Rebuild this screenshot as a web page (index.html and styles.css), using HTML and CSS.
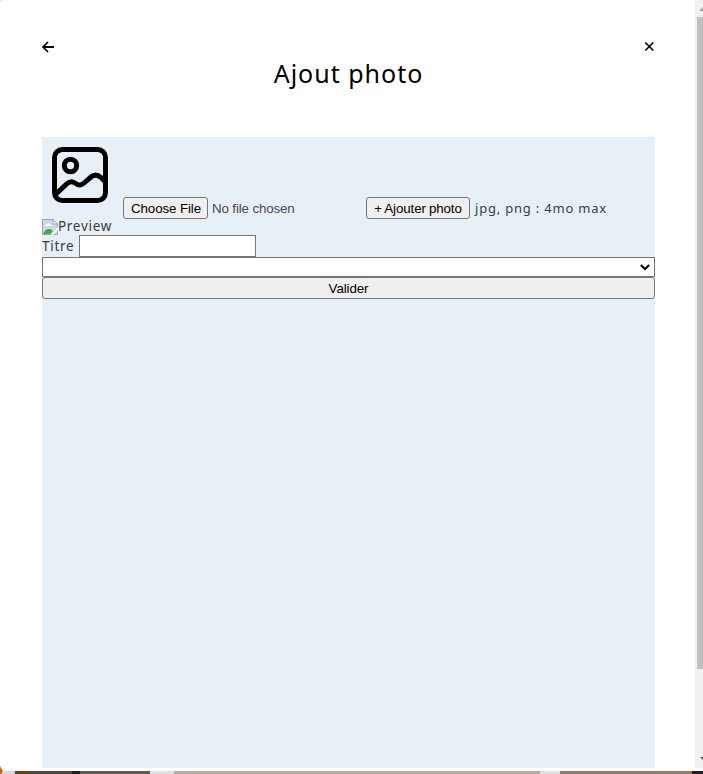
FILE: index.html
```html
<!DOCTYPE html>
<html lang="fr">
<head>
<meta charset="utf-8">
<title>Ajout photo</title>
<link rel="stylesheet" href="styles.css">
</head>
<body>
<div class="modal">
  <main class="content">
    <nav class="nav">
      <svg width="12" height="12" viewBox="0 0 12 12" fill="none" stroke="#000" stroke-width="2"><path d="M12 6H1"/><path d="M6 1L1 6l5 5" stroke-width="1.7"/></svg>
      <svg width="11" height="12" viewBox="0 0 11 12" fill="none" stroke="#000" stroke-width="1.7"><path d="M1.3 1.500l8 8M9.3 1.500l-8 8"/></svg>
    </nav>
    <h1 class="title">Ajout photo</h1>
    <form class="form">
      <div class="upload">
        <svg class="picture" width="56" height="56" viewBox="0 0 56 56" fill="none" stroke="#000" stroke-width="5"><rect x="2.5" y="2.5" width="51" height="51" rx="8"/><circle cx="18.5" cy="18.5" r="6.2"/><path d="M3 48L14 37.5Q18.5 33 23 36Q27.500 40 32 36L39 30Q44 26 49 30.500L54 35.500"/></svg>
        <input class="file" type="file">
        <button class="add" type="button">+ Ajouter photo</button>
        <span class="hint">jpg, png : 4mo max</span>
      </div>
      <div class="preview">
        <svg width="16" height="16" viewBox="0 0 16 16"><path d="M.5.500H11L15.500 5v10.500H.5z" fill="#c5d9f6" stroke="#a5a5a5"/><path d="M11 .5V5h4.500z" fill="#fff" stroke="#a5a5a5"/><path d="M3 7Q3 5 5 5Q7 3 8.500 6Q10 6 10 7z" fill="#fff"/><path d="M1 15Q3 10 7 10Q9 10 11 12L8 15z" fill="#49a835"/><path d="M16 8L9 16h2l5-5z" fill="#fff"/></svg><span class="preview-text">Preview</span>
      </div>
      <label class="field"><span class="field-text">Titre</span><input class="text" type="text"></label>
      <div class="select"><svg width="10" height="7" viewBox="0 0 10 7" fill="none" stroke="#000" stroke-width="2"><path d="M.8 1L5 5l4.200-4"/></svg></div>
      <button class="submit" type="button">Valider</button>
    </form>
  </main>
  <aside class="scrollbar">
    <svg class="cap" width="8" height="17" viewBox="0 0 8 17"><path d="M4 11L8 7v4z" fill="#a3a3a3"/></svg>
    <div class="thumb"></div>
    <svg class="cap end" width="8" height="17" viewBox="0 0 8 17"><path d="M5 6h3v3z" fill="#505050"/></svg>
  </aside>
</div>
<div class="backdrop"></div>
</body>
</html>
```
FILE: styles.css
```css
* { box-sizing: border-box; }
body {
  margin: 0;
  height: 774px;
  display: flex;
  flex-direction: column;
  overflow: hidden;
  background: linear-gradient(#e4e4e4 20px, transparent 20px), linear-gradient(90deg, #b86b20 3px, #dce3e6 3px);
  font-family: "Noto Sans", sans-serif;
  color: #3d3d3d;
}
.modal {
  height: 771px;
  padding-bottom: 3px;
  display: flex;
  background: #fff;
  border-radius: 4px 0 0 6px;
}
.content {
  width: 695px;
  padding: 41px 40px 0 42px;
  display: flex;
  flex-direction: column;
}
.nav { height: 12px; display: flex; justify-content: space-between; }
.title {
  margin: 3px 0 0;
  height: 36px;
  line-height: 35px;
  text-align: center;
  font-size: 25px;
  font-weight: 400;
  letter-spacing: 1px;
  color: #000;
}
.form {
  margin-top: 45px;
  flex: 1;
  display: flex;
  flex-direction: column;
  background: #e8f0f7;
}
.upload { height: 82px; display: flex; align-items: flex-end; }
.picture { margin: 0 15px 16px 10px; }
button, .file::file-selector-button {
  height: 22px;
  margin: 0;
  padding: 0 7px;
  border: 1px solid #767676;
  border-radius: 3px;
  background: #efefef;
  color: #000;
  font: 13.33px "Liberation Sans", sans-serif;
  letter-spacing: -.1px;
}
.file {
  width: 239px;
  height: 22px;
  margin-right: 4px;
  font: 13.33px "Liberation Sans", sans-serif;
  letter-spacing: -.13px;
  color: #484848;
}
.file::file-selector-button { width: 85px; margin-right: 4px; }
.add { width: 104px; white-space: nowrap; word-spacing: -.5px; }
.hint { margin-left: 5px; height: 22px; line-height: 22px; font-size: 13px; letter-spacing: .8px; white-space: nowrap; }
.preview { height: 16px; display: flex; line-height: 15px; font-size: 13.5px; letter-spacing: .7px; }
.field { height: 22px; display: flex; line-height: 22px; font-size: 13.5px; letter-spacing: .7px; }
.field-text { width: 37px; }
.text { width: 177px; height: 22px; border: 1px solid #767676; background: #fff; }
.select {
  height: 20px;
  padding-right: 4px;
  display: flex;
  justify-content: flex-end;
  align-items: center;
  border: 1px solid #767676;
  background: #fff;
}
.scrollbar { width: 8px; height: 768px; display: flex; flex-direction: column; background: #f1f1f1; }
.thumb { height: 652px; margin-left: 2px; background: #c1c1c1; }
.cap { flex: none; }
.end { margin-top: auto; }
.backdrop {
  height: 3px;
  background: linear-gradient(90deg, #b86b20 0 2px, #d3dadd 2px 15px, #704006 15px 27px, #51473d 27px 72px, #20201f 72px 80px, #65574a 80px 150px, #dfe2e3 150px 174px, #b9aa9b 174px 540px, #e2e2e2 540px 560px, #9a7961 560px 692px, #292224 692px);
}
```
